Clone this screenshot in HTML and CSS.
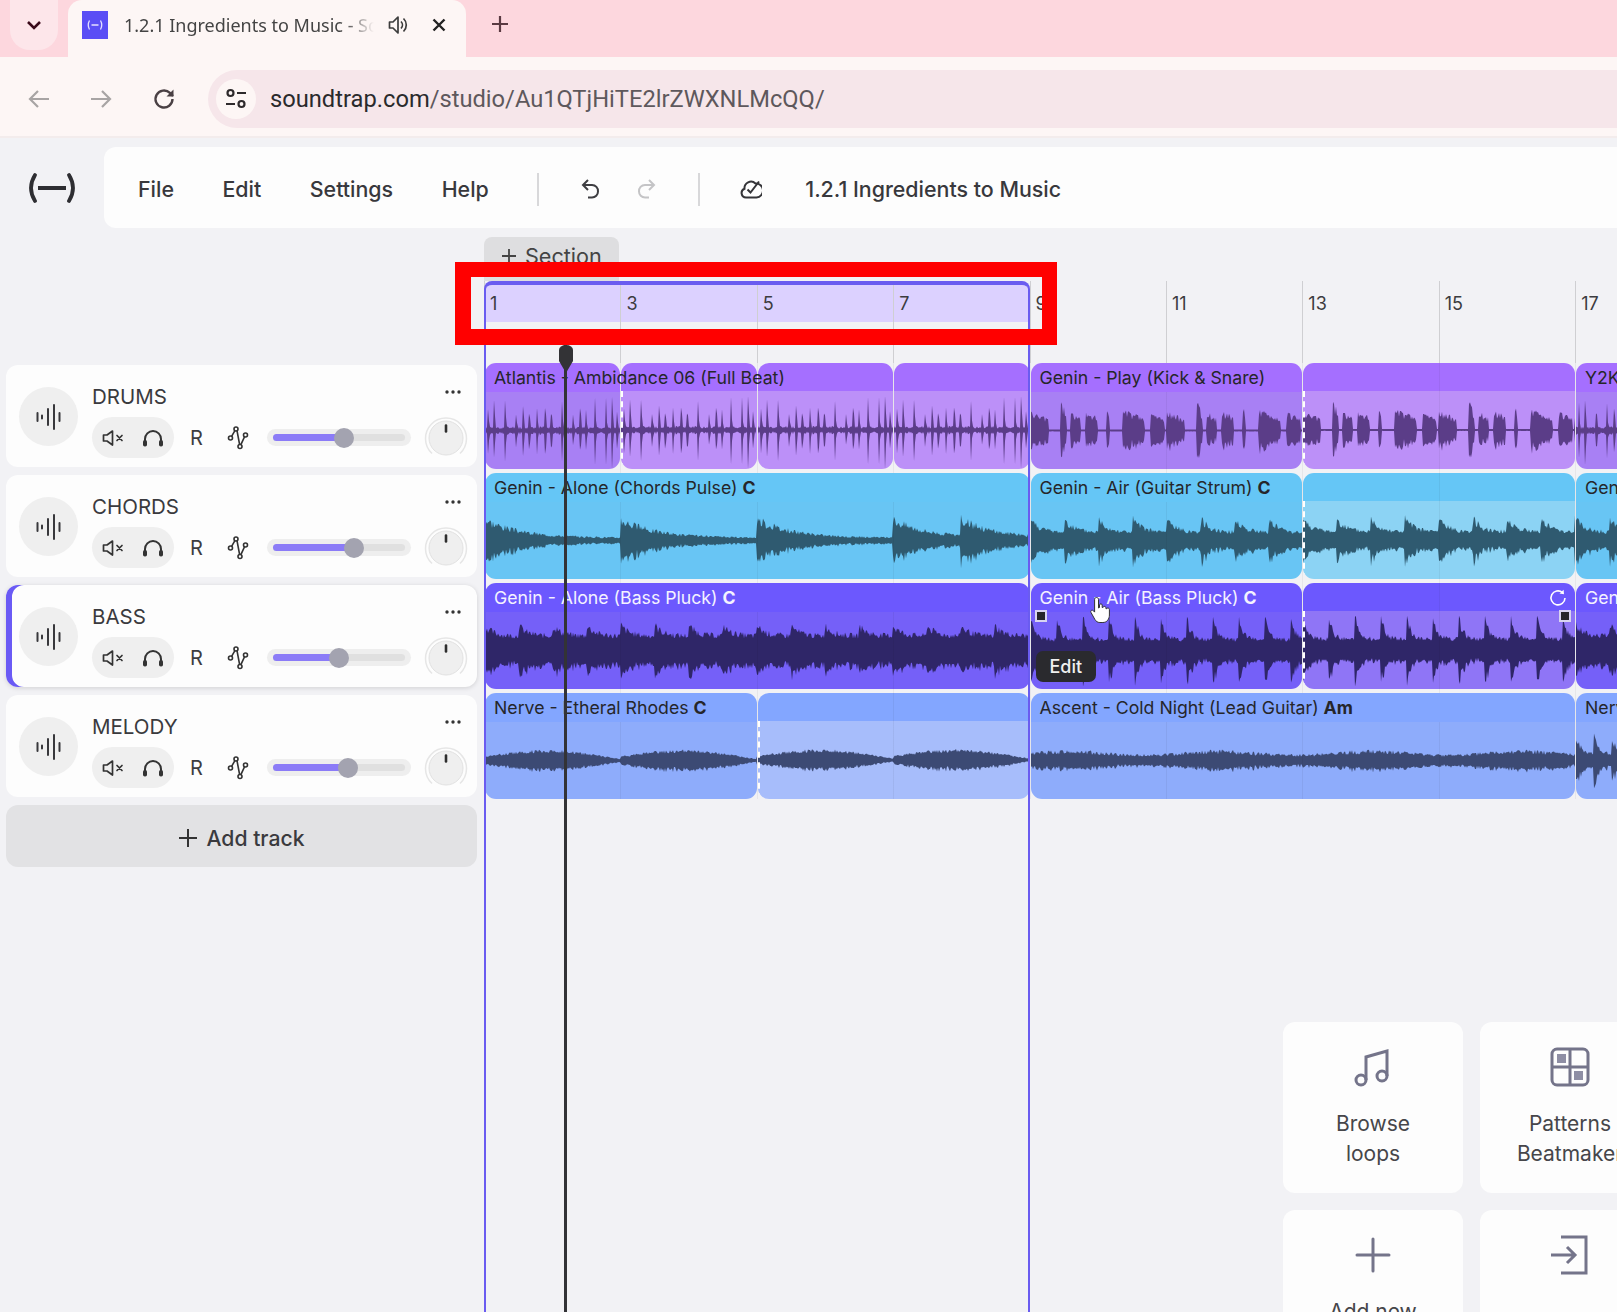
FILE: index.html
```html
<!DOCTYPE html>
<html lang="en">
<head>
    <meta charset="UTF-8">
    <meta name="viewport" content="width=device-width, initial-scale=1.0">
    <title>1.2.1 Ingredients to Music - Soundtrap</title>
    <link rel="stylesheet" href="styles.css">
</head>
<body>
    <svg class="sprites" width="0" height="0">
        <symbol id="i-bars" viewBox="0 0 26 26"><path d="M1.5 9v8M6 11.5v3M12 5v16M18 1v24M23.5 9v8" fill="none" stroke="currentColor" stroke-width="2" stroke-linecap="round"/></symbol>
        <symbol id="i-mute" viewBox="0 0 22 18"><path d="M1.5 6v6h3.5l5.5 4V2L5 6z" fill="none" stroke="currentColor" stroke-width="1.7" stroke-linejoin="round"/><path d="M15 6.5l5 5M20 6.5l-5 5" stroke="currentColor" stroke-width="1.7" stroke-linecap="round"/></symbol>
        <symbol id="i-phones" viewBox="0 0 22 18"><path d="M3 14V10a8 8 0 0 1 16 0v4" fill="none" stroke="currentColor" stroke-width="2"/><rect x="1" y="11" width="4" height="6.5" rx="1.8" fill="currentColor"/><rect x="17" y="11" width="4" height="6.5" rx="1.8" fill="currentColor"/></symbol>
        <symbol id="i-nodes" viewBox="0 0 22 24"><g fill="none" stroke="currentColor" stroke-width="1.6"><circle cx="3.5" cy="12" r="2"/><circle cx="9" cy="3" r="2"/><circle cx="13" cy="20.5" r="2"/><circle cx="18.5" cy="9" r="2"/><path d="M4.6 10.3L7.9 4.7M10 4.7l2.6 13.8M13.9 18.7l3.7-8"/></g></symbol>
        <symbol id="i-dots" viewBox="0 0 16 4"><circle cx="2" cy="2" r="1.7" fill="currentColor"/><circle cx="8" cy="2" r="1.7" fill="currentColor"/><circle cx="14" cy="2" r="1.7" fill="currentColor"/></symbol>
        <symbol id="i-knob" viewBox="0 0 44 44"><path d="M8 37.5a20.5 20.5 0 1 1 28 0" fill="none" stroke="#e6e6e6" stroke-width="1.5"/><circle cx="22" cy="22" r="17" fill="#efefef" stroke="#e2e2e2"/><path d="M22 9.5v6" stroke="#2e2e2e" stroke-width="2.6" stroke-linecap="round"/></symbol>
    </svg>

    <div class="tabstrip">
        <div class="tab-search">
            <svg width="16" height="10" viewBox="0 0 16 10"><path d="M2 2l6 6 6-6" fill="none" stroke="#3a0a1a" stroke-width="2.6"/></svg>
        </div>
        <div class="tab">
            <span class="favicon">
                <svg width="18" height="12" viewBox="0 0 18 12"><path d="M3.5 1.5Q1 6 3.5 10.5M14.5 1.5Q17 6 14.5 10.5M5.5 6h7" fill="none" stroke="#e4e0ff" stroke-width="1.3"/></svg>
            </span>
            <span class="tab-title">1.2.1 Ingredients to Music - Soundtrap</span>
            <svg class="tab-audio" width="20" height="22" viewBox="0 0 20 22"><path d="M1.5 8v6H5l5 5V3L5 8z" fill="none" stroke="#3c3c3c" stroke-width="1.7" stroke-linejoin="round"/><path d="M13 7.5a5 5 0 0 1 0 7M15.5 4.5a9 9 0 0 1 0 13" fill="none" stroke="#3c3c3c" stroke-width="1.7"/></svg>
            <svg class="tab-close" width="14" height="14" viewBox="0 0 14 14"><path d="M1.5 1.5l11 11M12.5 1.5l-11 11" stroke="#222" stroke-width="2.4"/></svg>
        </div>
        <svg class="tab-new" width="18" height="18" viewBox="0 0 18 18"><path d="M9 1v16M1 9h16" stroke="#5a3a42" stroke-width="2.2"/></svg>
    </div>

    <div class="toolbar">
        <svg class="nav-icon" width="22" height="20" viewBox="0 0 22 20"><path d="M21 10H2M10 2l-8 8 8 8" fill="none" stroke="#a8a4a4" stroke-width="2.2"/></svg>
        <svg class="nav-icon" width="22" height="20" viewBox="0 0 22 20"><path d="M1 10h19M12 2l8 8-8 8" fill="none" stroke="#a8a4a4" stroke-width="2.2"/></svg>
        <svg class="nav-icon" width="22" height="22" viewBox="0 0 22 22"><path d="M19.5 11a8.500 8.500 0 1 1-2.600-6.100L20 8" fill="none" stroke="#4a4044" stroke-width="2.4"/><path d="M20.5 1.5V8.500H13.500z" fill="#4a4044"/></svg>
        <div class="address">
            <span class="site-info">
                <svg width="22" height="22" viewBox="0 0 22 22"><g fill="none" stroke="#2e2a2c" stroke-width="2.2"><circle cx="5.5" cy="5" r="3"/><path d="M12 5h9M1 16h9"/><circle cx="16.5" cy="16" r="3"/></g></svg>
            </span>
            <span class="url"><b>soundtrap.com</b>/studio/Au1QTjHiTE2lrZWXNLMcQQ/</span>
        </div>
    </div>

    <div class="app-header">
        <div class="logo">
            <svg width="50" height="30" viewBox="0 0 50 30"><path d="M8 2Q0 15 8 28M42 2Q50 15 42 28" fill="none" stroke="#2e2e32" stroke-width="3.8" stroke-linecap="round"/><path d="M11 15h28" stroke="#2e2e32" stroke-width="4"/></svg>
        </div>
        <div class="menubar">
            <span class="menu-item">File</span>
            <span class="menu-item">Edit</span>
            <span class="menu-item">Settings</span>
            <span class="menu-item">Help</span>
            <span class="divider"></span>
            <svg class="undo" width="20" height="22" viewBox="0 0 20 22"><path d="M7 2L2 7l5 5M2 7h9a6 6 0 0 1 6 6.500 6 6 0 0 1-6 6H7" fill="none" stroke="#3e3e42" stroke-width="2"/></svg>
            <svg class="redo" width="20" height="22" viewBox="0 0 20 22"><path d="M13 2l5 5-5 5M18 7H9a6 6 0 0 0-6 6.500 6 6 0 0 0 6 6h4" fill="none" stroke="#c4c4c6" stroke-width="2"/></svg>
            <span class="divider"></span>
            <svg class="saved" width="22" height="22" viewBox="0 0 22 22"><path d="M6 19.500a4.500 4.500 0 0 1-1.500-8.700A6.500 6.500 0 0 1 15.500 5.500 7 7 0 0 1 16.500 19.500z" fill="none" stroke="#343438" stroke-width="2"/><path d="M7.500 11.500l3 3L19 3.500" fill="none" stroke="#343438" stroke-width="2"/></svg>
            <span class="project-title">1.2.1 Ingredients to Music</span>
        </div>
    </div>

    <div class="workspace">
        <div class="tracks">
            <div class="track">
                <span class="track-avatar"><svg width="26" height="26"><use href="#i-bars"/></svg></span>
                <div class="track-main">
                    <div class="track-top">
                        <span class="track-name">DRUMS</span>
                        <svg class="track-more" width="16" height="4"><use href="#i-dots"/></svg>
                    </div>
                    <div class="track-controls">
                        <span class="mute-solo">
                            <svg width="22" height="18"><use href="#i-mute"/></svg>
                            <svg width="22" height="18"><use href="#i-phones"/></svg>
                        </span>
                        <span class="rec">R</span>
                        <svg class="nodes" width="22" height="24"><use href="#i-nodes"/></svg>
                        <span class="slider" style="--level:0.54"><span class="slider-fill"></span><span class="slider-thumb"></span></span>
                        <svg class="knob" width="44" height="44"><use href="#i-knob"/></svg>
                    </div>
                </div>
            </div>
            <div class="track">
                <span class="track-avatar"><svg width="26" height="26"><use href="#i-bars"/></svg></span>
                <div class="track-main">
                    <div class="track-top">
                        <span class="track-name">CHORDS</span>
                        <svg class="track-more" width="16" height="4"><use href="#i-dots"/></svg>
                    </div>
                    <div class="track-controls">
                        <span class="mute-solo">
                            <svg width="22" height="18"><use href="#i-mute"/></svg>
                            <svg width="22" height="18"><use href="#i-phones"/></svg>
                        </span>
                        <span class="rec">R</span>
                        <svg class="nodes" width="22" height="24"><use href="#i-nodes"/></svg>
                        <span class="slider" style="--level:0.61"><span class="slider-fill"></span><span class="slider-thumb"></span></span>
                        <svg class="knob" width="44" height="44"><use href="#i-knob"/></svg>
                    </div>
                </div>
            </div>
            <div class="track active">
                <span class="track-avatar"><svg width="26" height="26"><use href="#i-bars"/></svg></span>
                <div class="track-main">
                    <div class="track-top">
                        <span class="track-name">BASS</span>
                        <svg class="track-more" width="16" height="4"><use href="#i-dots"/></svg>
                    </div>
                    <div class="track-controls">
                        <span class="mute-solo">
                            <svg width="22" height="18"><use href="#i-mute"/></svg>
                            <svg width="22" height="18"><use href="#i-phones"/></svg>
                        </span>
                        <span class="rec">R</span>
                        <svg class="nodes" width="22" height="24"><use href="#i-nodes"/></svg>
                        <span class="slider" style="--level:0.5"><span class="slider-fill"></span><span class="slider-thumb"></span></span>
                        <svg class="knob" width="44" height="44"><use href="#i-knob"/></svg>
                    </div>
                </div>
            </div>
            <div class="track">
                <span class="track-avatar"><svg width="26" height="26"><use href="#i-bars"/></svg></span>
                <div class="track-main">
                    <div class="track-top">
                        <span class="track-name">MELODY</span>
                        <svg class="track-more" width="16" height="4"><use href="#i-dots"/></svg>
                    </div>
                    <div class="track-controls">
                        <span class="mute-solo">
                            <svg width="22" height="18"><use href="#i-mute"/></svg>
                            <svg width="22" height="18"><use href="#i-phones"/></svg>
                        </span>
                        <span class="rec">R</span>
                        <svg class="nodes" width="22" height="24"><use href="#i-nodes"/></svg>
                        <span class="slider" style="--level:0.57"><span class="slider-fill"></span><span class="slider-thumb"></span></span>
                        <svg class="knob" width="44" height="44"><use href="#i-knob"/></svg>
                    </div>
                </div>
            </div>
            <div class="add-track">
                <svg width="20" height="20" viewBox="0 0 20 20"><path d="M10 1v18M1 10h18" stroke="#333" stroke-width="2"/></svg>
                <span>Add track</span>
            </div>
        </div>

        <div class="timeline">
            <div class="section-btn">
                <svg width="16" height="16" viewBox="0 0 16 16"><path d="M8 1v14M1 8h14" stroke="#444" stroke-width="1.8"/></svg>
                <span>Section</span>
            </div>
            <div class="ruler">
                <span class="ruler-selection"></span>
                <span class="bar">1</span><span class="bar">3</span><span class="bar">5</span><span class="bar">7</span>
                <span class="bar">9</span><span class="bar">11</span><span class="bar">13</span><span class="bar">15</span><span class="bar">17</span>
            </div>

            <div class="lanes">
                <div class="lane lane-drums">
                    <div class="clip span-2">
                        <div class="clip-head">Atlantis - Ambidance 06 (Full Beat)</div>
                        <div class="clip-body" data-wave="beat" data-seed="11"></div>
                    </div>
                    <div class="clip span-2 loop loop-start">
                        <div class="clip-head"></div>
                        <div class="clip-body" data-wave="beat" data-seed="11"></div>
                    </div>
                    <div class="clip span-2 loop">
                        <div class="clip-head"></div>
                        <div class="clip-body" data-wave="beat" data-seed="11"></div>
                    </div>
                    <div class="clip span-2 loop">
                        <div class="clip-head"></div>
                        <div class="clip-body" data-wave="beat" data-seed="11"></div>
                    </div>
                    <div class="clip span-4">
                        <div class="clip-head">Genin - Play (Kick &amp; Snare)</div>
                        <div class="clip-body" data-wave="play" data-seed="5"></div>
                    </div>
                    <div class="clip span-4 loop loop-start">
                        <div class="clip-head"></div>
                        <div class="clip-body" data-wave="play" data-seed="5"></div>
                    </div>
                    <div class="clip span-4">
                        <div class="clip-head">Y2K</div>
                        <div class="clip-body" data-wave="beat" data-seed="23"></div>
                    </div>
                </div>

                <div class="lane lane-chords">
                    <div class="clip span-8">
                        <div class="clip-head">Genin - Alone (Chords Pulse) <b>C</b></div>
                        <div class="clip-body" data-wave="pulse" data-seed="3"></div>
                    </div>
                    <div class="clip span-4">
                        <div class="clip-head">Genin - Air (Guitar Strum) <b>C</b></div>
                        <div class="clip-body" data-wave="strum" data-seed="8"></div>
                    </div>
                    <div class="clip span-4 loop loop-start">
                        <div class="clip-head"></div>
                        <div class="clip-body" data-wave="strum" data-seed="8"></div>
                    </div>
                    <div class="clip span-4">
                        <div class="clip-head">Genin</div>
                        <div class="clip-body" data-wave="strum" data-seed="14"></div>
                    </div>
                </div>

                <div class="lane lane-bass">
                    <div class="clip span-8">
                        <div class="clip-head">Genin - Alone (Bass Pluck) <b>C</b></div>
                        <div class="clip-body" data-wave="bass" data-seed="6"></div>
                    </div>
                    <div class="clip span-4 selected">
                        <div class="clip-head">Genin - Air (Bass Pluck) <b>C</b></div>
                        <div class="clip-body" data-wave="pluck" data-seed="9"></div>
                        <span class="handle handle-left"></span>
                        <span class="edit-tip">Edit</span>
                        <svg class="hand" width="24" height="30" viewBox="0 0 24 30"><path d="M7.500 2.500c1.200 0 2 .8 2 2v8.500l1-.5V10c0-1.500 2.600-1.500 2.700 0v2.500l1-.2c.2-1.300 2.600-1.200 2.700.3v1l.9.100c.3-1 2.500-1 2.600.8V20c0 4-2.400 7.500-6.500 7.500h-3c-2.500 0-3.800-1.200-5-3L2 17.500c-1-1.800 1.200-3.200 2.600-1.600l1 1.200V4.500c0-1.200.8-2 1.900-2z" fill="#fff" stroke="#333" stroke-width="1"/></svg>
                    </div>
                    <div class="clip span-4 loop loop-start selected">
                        <div class="clip-head"></div>
                        <div class="clip-body" data-wave="pluck" data-seed="9"></div>
                        <svg class="loop-icon" width="18" height="18" viewBox="0 0 18 18"><path d="M13.500 3.500A7 7 0 1 0 16 9" fill="none" stroke="#fff" stroke-width="1.6"/><path d="M10.500 4.500l4.500.8-.4-4.500z" fill="#fff"/></svg>
                        <span class="handle handle-right"></span>
                    </div>
                    <div class="clip span-4">
                        <div class="clip-head">Genin</div>
                        <div class="clip-body" data-wave="bass" data-seed="17"></div>
                    </div>
                </div>

                <div class="lane lane-melody">
                    <div class="clip span-4">
                        <div class="clip-head">Nerve - Etheral Rhodes <b>C</b></div>
                        <div class="clip-body" data-wave="rhodes" data-seed="4"></div>
                    </div>
                    <div class="clip span-4 loop loop-start">
                        <div class="clip-head"></div>
                        <div class="clip-body" data-wave="rhodes" data-seed="4"></div>
                    </div>
                    <div class="clip span-8">
                        <div class="clip-head">Ascent - Cold Night (Lead Guitar) <b>Am</b></div>
                        <div class="clip-body" data-wave="lead" data-seed="12"></div>
                    </div>
                    <div class="clip span-4">
                        <div class="clip-head">Nerve</div>
                        <div class="clip-body" data-wave="rhodes2" data-seed="21"></div>
                    </div>
                </div>
            </div>

            <div class="loop-region"></div>
            <div class="playhead">
                <svg width="16" height="28" viewBox="0 0 16 28"><path d="M1 5a7 5 0 0 1 14 0v11l-7 12-7-12z" fill="#333336"/></svg>
            </div>
            <div class="red-box"></div>

            <div class="add-cards">
                <div class="add-card">
                    <svg width="40" height="40" viewBox="0 0 40 40"><g fill="none" stroke="#74748a" stroke-width="3"><circle cx="8" cy="33" r="5"/><circle cx="29" cy="29" r="5"/><path d="M13 33V10L34 4v25"/></g></svg>
                    <span>Browse<br>loops</span>
                </div>
                <div class="add-card">
                    <svg width="40" height="40" viewBox="0 0 40 40"><rect x="2" y="2" width="36" height="36" rx="5" fill="none" stroke="#74748a" stroke-width="3"/><path d="M20 2v36M2 20h36" stroke="#74748a" stroke-width="3"/><rect x="7" y="7" width="9" height="9" fill="#8e8ea4"/><rect x="24" y="24" width="9" height="9" fill="#8e8ea4"/></svg>
                    <span>Patterns<br>Beatmaker</span>
                </div>
                <div class="add-card">
                    <svg width="40" height="40" viewBox="0 0 40 40"><path d="M20 4v32M4 20h32" stroke="#74748a" stroke-width="3" stroke-linecap="round"/></svg>
                    <span>Add new<br>track</span>
                </div>
                <div class="add-card">
                    <svg width="40" height="40" viewBox="0 0 40 40"><path d="M11 2h25v36H11M1 20h24M17 12l8 8-8 8" fill="none" stroke="#74748a" stroke-width="3"/></svg>
                </div>
            </div>
        </div>
    </div>

    <script src="waveforms.js"></script>
</body>
</html>
```

FILE: styles.css
```css
* {
    box-sizing: border-box;
}
html, body {
    height: 100%;
}
body {
    margin: 0;
    overflow: hidden;
    background: #f2f2f5;
    color: #333;
    font-family: Inter, 'Liberation Sans', sans-serif;
}
.sprites {
    position: absolute;
}

/* browser chrome */
.tabstrip {
    display: flex;
    align-items: flex-start;
    height: 57px;
    background: #fdd7de;
}
.tab-search {
    display: flex;
    align-items: center;
    justify-content: center;
    width: 48px;
    height: 50px;
    margin-left: 10px;
    background: #fde6ea;
    border-radius: 0 0 20px 20px;
}
.tab {
    display: flex;
    align-items: center;
    width: 398px;
    height: 57px;
    margin-left: 10px;
    padding: 0 0 8px 14px;
    background: #fdf6f5;
    border-radius: 14px 14px 0 0;
}
.favicon {
    display: flex;
    align-items: center;
    justify-content: center;
    width: 26px;
    height: 28px;
    background: #5a4ef5;
}
.tab-title {
    width: 250px;
    margin-left: 16px;
    overflow: hidden;
    white-space: nowrap;
    font-family: 'Noto Sans', sans-serif;
    font-size: 18px;
    color: #444;
    -webkit-mask-image: linear-gradient(to right, #000 88%, transparent);
    mask-image: linear-gradient(to right, #000 88%, transparent);
}
.tab-audio {
    margin-left: 14px;
}
.tab-close {
    margin-left: 24px;
}
.tab-new {
    margin: 15px 0 0 25px;
}
.toolbar {
    display: flex;
    align-items: center;
    gap: 40px;
    height: 81px;
    padding: 4px 0 0 28px;
    background: #fdf6f5;
    border-bottom: 2px solid #f3ecec;
}
.toolbar .nav-icon:nth-child(2) {
    margin-right: 1px;
}
.address {
    display: flex;
    align-items: center;
    flex: 1;
    height: 58px;
    margin-left: -7px;
    padding-left: 8px;
    background: #f6e6ea;
    border-radius: 29px 0 0 29px;
}
.site-info {
    display: flex;
    align-items: center;
    justify-content: center;
    width: 40px;
    height: 40px;
    background: #fdf6f5;
    border-radius: 50%;
}
.url {
    margin-left: 14px;
    font-family: Roboto, sans-serif;
    font-size: 23.7px;
    color: #5e585c;
    white-space: nowrap;
}
.url b {
    font-weight: 400;
    color: #2a2a2c;
}

/* app header */
.app-header {
    display: flex;
    align-items: stretch;
    height: 90px;
    padding-top: 9px;
}
.logo {
    display: flex;
    align-items: center;
    width: 104px;
    padding-left: 27px;
}
.menubar {
    display: flex;
    align-items: center;
    flex: 1;
    padding: 3px 0 0 34px;
    background: #fdfdfd;
    border-radius: 12px 0 0 12px;
    font-size: 21.4px;
    color: #38383c;
}
.menu-item {
    margin-right: 48.5px;
    font-weight: 500;
}
.divider {
    width: 2px;
    height: 33px;
    background: #d8d8da;
}
.undo {
    margin-left: 42px;
}
.redo {
    margin-left: 35px;
}
.menubar .redo + .divider {
    margin-left: 42px;
}
.saved {
    margin-left: 40px;
}
.project-title {
    margin-left: 43px;
    font-weight: 500;
    white-space: nowrap;
}

/* workspace */
.workspace {
    display: flex;
    height: 1084px;
}
.tracks {
    display: flex;
    flex-direction: column;
    gap: 8px;
    flex: 0 0 484px;
    padding: 137px 7px 0 6px;
}
.track {
    display: flex;
    height: 102px;
    padding: 20px 0 0 13px;
    background: #fdfdfd;
    border-radius: 12px;
}
.track.active {
    box-shadow: inset 6px 0 0 #6a5af5, 0 1px 5px rgba(0, 0, 0, 0.14);
}
.track-avatar {
    display: flex;
    align-items: center;
    justify-content: center;
    flex: 0 0 59px;
    height: 59px;
    margin-top: 2px;
    background: #efefef;
    border-radius: 50%;
    color: #38383c;
}
.track-main {
    flex: 1;
    margin-left: 14px;
}
.track-top {
    display: flex;
    align-items: flex-start;
    justify-content: space-between;
    height: 24px;
    padding-right: 16px;
}
.track-name {
    font-size: 20.5px;
    line-height: 24px;
    color: #3a3a3e;
}
.track-more {
    margin-top: 5px;
    color: #333;
}
.track-controls {
    display: flex;
    align-items: center;
    height: 41px;
    margin-top: 8px;
}
.mute-solo {
    display: flex;
    align-items: center;
    justify-content: center;
    gap: 18px;
    flex: 0 0 82px;
    height: 41px;
    background: #efefef;
    border-radius: 21px;
    color: #333;
}
.rec {
    flex: 0 0 14px;
    margin-left: 16px;
    font-size: 20px;
    color: #3c3c40;
}
.nodes {
    margin-left: 23px;
    color: #333;
}
.slider {
    position: relative;
    flex: 0 0 144px;
    height: 17px;
    margin-left: 18px;
    padding: 5px 6px;
    background: #eeeeee;
    border-radius: 9px;
}
.slider::before {
    content: "";
    display: block;
    height: 7px;
    background: #e0e0e0;
    border-radius: 4px;
}
.slider-fill {
    position: absolute;
    top: 5px;
    left: 6px;
    width: calc(132px * var(--level));
    height: 7px;
    background: #8b7bf7;
    border-radius: 4px;
}
.slider-thumb {
    position: absolute;
    top: -1.5px;
    left: calc(132px * var(--level) - 4px);
    width: 20px;
    height: 20px;
    background: #a3a3b0;
    border-radius: 50%;
}
.knob {
    margin-left: 13px;
}
.add-track {
    display: flex;
    align-items: center;
    justify-content: center;
    gap: 8px;
    height: 62px;
    padding-top: 3px;
    background: #e2e2e4;
    border-radius: 12px;
    font-size: 21.2px;
    font-weight: 500;
    color: #3a3a3e;
}

/* timeline */
.timeline {
    position: relative;
    flex: 1;
    min-width: 0;
}
.section-btn {
    display: flex;
    align-items: center;
    gap: 8px;
    width: 135px;
    height: 44px;
    margin-top: 9px;
    padding: 0 0 6px 17px;
    background: #dedee0;
    border-radius: 8px 8px 0 0;
    font-size: 21.6px;
    color: #444;
}
.ruler {
    position: relative;
    display: flex;
    height: 82px;
}
.ruler-selection {
    position: absolute;
    top: 0;
    left: 0;
    width: 545px;
    height: 41px;
    background: #dcd1ff;
    border-radius: 8px 8px 0 0;
}
.bar {
    position: relative;
    flex: 0 0 136.4px;
    padding: 12px 0 0 5px;
    border-left: 1px solid #cfcfd2;
    font-size: 18px;
    line-height: 22px;
    color: #3c3c40;
}
.lanes {
    position: relative;
    display: flex;
    flex-direction: column;
    gap: 4px;
}
.lanes::after {
    content: "";
    position: absolute;
    inset: 0;
    background: repeating-linear-gradient(to right, rgba(0, 0, 0, 0.05) 0 1px, transparent 1px 136.4px);
    pointer-events: none;
}
.lane {
    display: grid;
    grid-template-columns: repeat(20, 68.2px);
    height: 106px;
    width: 1364px;
}
.span-2 { grid-column: span 2; }
.span-4 { grid-column: span 4; }
.span-8 { grid-column: span 8; }
.clip {
    position: relative;
    display: flex;
    flex-direction: column;
    margin-left: 1px;
    color: #26262a;
}
.clip-head {
    position: relative;
    flex: 0 0 28px;
    padding-left: 9px;
    background: var(--head);
    border-radius: 11px 11px 0 0;
    font-size: 17.7px;
    line-height: 29px;
    white-space: nowrap;
}
.clip:not(.loop) .clip-head {
    z-index: 1;
}
.clip-head b {
    font-weight: 700;
}
.clip-body {
    position: relative;
    flex: 1;
    overflow: hidden;
    background: var(--body);
    border-radius: 0 0 11px 11px;
    color: var(--wave);
}
.clip-body svg {
    display: block;
}
.clip.loop .clip-body {
    background: var(--loop);
}
.clip.loop-start .clip-body::before {
    content: "";
    position: absolute;
    top: 0;
    bottom: 0;
    left: 0;
    border-left: 2px dashed #fff;
}
.lane-drums {
    --head: #a56fff;
    --body: #a880f4;
    --loop: #bc90f8;
    --wave: #5b3d88;
}
.lane-chords {
    --head: #65c6f6;
    --body: #68c5f4;
    --loop: #8cd3f4;
    --wave: #2f5a70;
}
.lane-bass {
    --head: #6c58fe;
    --body: #7560f8;
    --loop: #8f75f6;
    --wave: #2f2668;
}
.lane-bass .clip-head {
    color: #f4f2ff;
}
.lane-melody {
    --head: #83a6ff;
    --body: #8eacfb;
    --loop: #a7bdfb;
    --wave: #3c4a74;
}
.handle {
    position: absolute;
    top: 27px;
    width: 12px;
    height: 12px;
    background: #26262a;
    border: 2px solid #d8d4f0;
    z-index: 1;
}
.handle-left {
    left: 4px;
}
.handle-right {
    right: 4px;
}
.edit-tip {
    position: absolute;
    left: 5px;
    bottom: 7px;
    padding: 0 14px;
    background: #2a2a2e;
    border-radius: 7px;
    font-size: 18px;
    font-weight: 500;
    line-height: 31px;
    color: #f0f0f0;
}
.hand {
    position: absolute;
    top: 12px;
    left: 58px;
    z-index: 2;
}
.loop-icon {
    position: absolute;
    top: 6px;
    right: 8px;
    z-index: 1;
}
.loop-region {
    position: absolute;
    top: 53px;
    bottom: 0;
    left: 0;
    z-index: 3;
    width: 546px;
    border: solid #6a5cf0;
    border-width: 4px 2px 0;
    border-radius: 8px 8px 0 0;
    pointer-events: none;
}
.playhead {
    position: absolute;
    top: 117px;
    bottom: 0;
    left: 80px;
    z-index: 3;
    width: 3px;
    background: #333336;
}
.playhead svg {
    position: absolute;
    top: 0;
    left: -6.5px;
}
.red-box {
    position: absolute;
    top: 34px;
    left: -29px;
    z-index: 4;
    width: 602px;
    height: 83px;
    border: solid #ff0000;
    border-width: 15px 15px 16px 16px;
}
.add-cards {
    position: absolute;
    top: 794px;
    left: 799px;
    display: grid;
    grid-template-columns: 180px 180px;
    grid-auto-rows: 171px;
    gap: 17px;
}
.add-card {
    display: flex;
    flex-direction: column;
    align-items: center;
    padding-top: 25px;
    background: #fdfdfd;
    border-radius: 12px;
}
.add-card span {
    margin-top: 22px;
    text-align: center;
    font-size: 21px;
    line-height: 29.5px;
    color: #46464a;
}
```

FILE: waveforms.js
```js
// draws the audio waveforms into the clips
function rng(seed) {
    let s = seed * 9301 + 49297;
    return function () {
        s = (s * 9301 + 49297) % 233280;
        return s / 233280;
    };
}

// hit times of a drum bar, in pixels
const beatHits = [3, 9, 20, 31, 38, 44, 52, 60, 66, 77, 88, 95, 101, 110, 121, 127, 132];
const playBlobs = [[0, 18, 20], [30, 6, 30], [40, 10, 20], [55, 12, 22], [76, 3, 28], [92, 22, 22], [120, 14, 20]];

// every kind gives the height of the wave at pixel x
const kinds = {
    beat(x, r) {
        const p = x % 136;
        for (const hit of beatHits) {
            if (p === hit) return 16 + r() * 20;
            if (p === hit + 1) return 6 + r() * 12;
        }
        return 1.5 + r() * 3;
    },
    play(x, r) {
        const p = x % 136;
        for (const b of playBlobs) {
            if (p >= b[0] && p < b[0] + b[1]) {
                return b[2] * (1 - 0.4 * (p - b[0]) / b[1]) * (0.6 + r() * 0.45);
            }
        }
        return 1;
    },
    pulse(x, r) {
        const starts = [0, 136, 272, 408, 476];
        let start = 0;
        for (const s of starts) if (x >= s) start = s;
        return (3 + 21 * Math.exp(-(x - start) / 34)) * (0.65 + r() * 0.5);
    },
    strum(x, r) {
        return (10 + 16 * Math.exp(-(x % 34) / 9)) * (0.65 + r() * 0.4);
    },
    bass(x, r) {
        return (17 + 12 * Math.exp(-(x % 34) / 8)) * (0.72 + r() * 0.35);
    },
    pluck(x, r) {
        return (13 + 26 * Math.exp(-(x % 26) / 4)) * (0.7 + r() * 0.35);
    },
    rhodes(x, r) {
        const d = x % 136;
        return (3 + 8 * Math.sin(Math.PI * (d + 8) / 136)) * (0.7 + r() * 0.35);
    },
    rhodes2(x, r) {
        return (8 + 20 * Math.exp(-(x % 18) / 5)) * (0.65 + r() * 0.4);
    },
    lead(x, r) {
        return (8 + 2 * Math.sin(x / 24)) * (0.65 + r() * 0.5);
    }
};

document.querySelectorAll('[data-wave]').forEach(function (body) {
    const w = Math.round(body.clientWidth);
    const h = body.clientHeight;
    const mid = h / 2;
    const r = rng(Number(body.dataset.seed));
    const shape = kinds[body.dataset.wave];
    let upper = '';
    let lower = '';

    for (let x = 0; x <= w; x++) {
        const a = Math.min(shape(x, r), mid - 3);
        upper += `L${x} ${(mid - a * 0.95).toFixed(1)}`;
        lower = `L${x} ${(mid + a * (0.8 + r() * 0.3)).toFixed(1)}` + lower;
    }

    body.insertAdjacentHTML('afterbegin',
        `<svg width="${w}" height="${h}"><path d="M0 ${mid}${upper}${lower}Z" fill="currentColor"/></svg>`);
});
```
